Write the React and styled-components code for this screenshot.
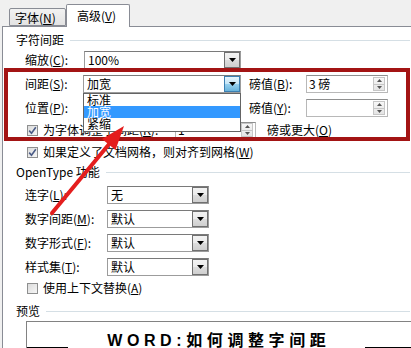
import React from 'react';
import styled, { createGlobalStyle } from 'styled-components';

const Global = createGlobalStyle`
  html, body { margin: 0; padding: 0; background: #f0f0f0; overflow: hidden; }
  body {
    font-family: "Noto Sans CJK SC", "Liberation Sans", sans-serif;
    font-size: 12px;
    color: #000;
  }
`;

const Window = styled.div`
  position: relative;
  width: 411px;
  height: 348px;
  overflow: hidden;
  background: #f0f0f0;
  display: flex;
  flex-direction: column;
  line-height: 14px;
`;

const TabStrip = styled.div`
  display: flex;
  align-items: flex-end;
  height: 26px;
  padding-left: 9px;
  flex: none;
`;

const Tab = styled.div`
  position: relative;
  z-index: ${p => (p.$active ? 2 : 1)};
  box-sizing: border-box;
  height: ${p => (p.$active ? 23 : 18)}px;
  width: ${p => p.$w}px;
  margin-bottom: ${p => (p.$active ? -1 : 0)}px;
  padding-left: ${p => p.$pl}px;
  padding-top: ${p => (p.$active ? 4 : 2)}px;
  border: 1px solid #898c95;
  border-bottom: ${p => (p.$active ? 'none' : '1px solid #898c95')};
  border-radius: 2px 2px 0 0;
  background: ${p => (p.$active ? '#fff' : 'linear-gradient(#f2f2f2, #e3e3e3)')};
  white-space: nowrap;
`;

const Key = styled.span`
  text-decoration: underline;
`;

const Panel = styled.div`
  flex: 1;
  margin-left: 2px;
  padding-right: 1px;
  border-top: 1px solid #898c95;
  border-left: 1px solid #898c95;
  background: #fff;
  display: flex;
  flex-direction: column;
  min-height: 0;
`;

const GroupTitle = styled.div`
  display: flex;
  align-items: center;
  height: 14px;
  margin-top: ${p => p.$mt}px;
  padding-left: 13px;
  white-space: nowrap;
  flex: none;
`;

const Rule = styled.div`
  flex: 1;
  height: 1px;
  margin-left: 6px;
  background: #d5dfe5;
`;

const Row = styled.div`
  display: flex;
  align-items: center;
  height: 18px;
  margin-top: ${p => p.$mt}px;
  padding-left: ${p => p.$pl ?? 22}px;
  flex: none;
`;

const Label = styled.span`
  flex: none;
  width: ${p => (p.$w ? `${p.$w}px` : 'auto')};
  margin-left: ${p => p.$ml ?? 0}px;
  white-space: nowrap;
`;

const ComboWrap = styled.div`
  position: relative;
  flex: none;
`;

const Combo = styled.div`
  box-sizing: border-box;
  width: ${p => p.$w}px;
  height: 18px;
  border: 1px solid #9c9c9c;
  border-top-color: #7a7a7a;
  background: #fff;
  display: flex;
  align-items: center;
`;

const ComboText = styled.span`
  flex: 1;
  padding-left: 3px;
  white-space: nowrap;
  overflow: hidden;
`;

const DropBtn = styled.div`
  box-sizing: border-box;
  width: 16px;
  height: 16px;
  flex: none;
  display: flex;
  align-items: center;
  justify-content: center;
  border: 1px solid ${p => (p.$open ? '#3c7fb1' : '#707070')};
  background: ${p =>
    p.$open
      ? 'linear-gradient(#e5f4fc, #c4e5f6 50%, #98d1ef 50%, #68b3db)'
      : 'linear-gradient(#f2f2f2, #ebebeb 50%, #dddddd 50%, #cfcfcf)'};
`;

const DropList = styled.div`
  position: absolute;
  z-index: 5;
  left: 0;
  top: 18px;
  width: 158px;
  box-sizing: border-box;
  border: 1px solid #646464;
  background: #fff;
  padding: 0 0 1px;
`;

const DropItem = styled.div`
  height: 12px;
  line-height: 12px;
  padding-left: 3px;
  background: ${p => (p.$sel ? '#3399ff' : 'transparent')};
  color: ${p => (p.$sel ? '#fff' : '#000')};
  overflow: hidden;
  white-space: nowrap;
`;

const SpinBox = styled.div`
  box-sizing: border-box;
  flex: none;
  width: ${p => p.$w}px;
  height: ${p => p.$h ?? 18}px;
  border: 1px solid #b8b8b8;
  border-top-color: #8e8f8f;
  background: #fff;
  display: flex;
  align-items: center;
  padding-right: 2px;
`;

const SpinText = styled.span`
  flex: 1;
  padding-left: 2px;
  white-space: nowrap;
`;

const SpinnerBox = styled.div`
  box-sizing: border-box;
  width: 12px;
  height: 14px;
  flex: none;
  display: flex;
  flex-direction: column;
  border: 1px solid #c6c6c6;
  background: linear-gradient(#f7f7f7, #e4e4e4);
`;

const SpinHalf = styled.div`
  flex: 1;
  display: flex;
  align-items: center;
  justify-content: center;
  border-top: ${p => (p.$bottom ? '1px solid #c6c6c6' : 'none')};
`;

const CheckRow = styled.div`
  display: flex;
  align-items: center;
  height: 16px;
  margin-top: ${p => p.$mt}px;
  padding-left: 24px;
  flex: none;
`;

const Box = styled.div`
  box-sizing: border-box;
  width: 11px;
  height: 11px;
  flex: none;
  border: 1px solid #8e8f8f;
  background: linear-gradient(135deg, #dcdcdc, #f6f6f6);
  display: flex;
  align-items: center;
  justify-content: center;
  margin-right: 5px;
`;

const Preview = styled.div`
  position: relative;
  flex: 1;
  margin: 3px -10px 0 23px;
  border: 1px solid #828282;
  background: #fff;
  display: flex;
  align-items: flex-start;
  padding-top: 11px;
`;

const BaseLine = styled.div`
  flex: none;
  width: ${p => p.$w}px;
  height: 1px;
  margin-top: 14px;
  background: #000;
`;

const Spacer = styled.div`
  flex: 1;
`;

const PreviewText = styled.div`
  flex: none;
  font-family: "Liberation Sans", "Noto Sans CJK SC", sans-serif;
  font-weight: bold;
  font-size: 16px;
  line-height: 16px;
  letter-spacing: 4.6px;
  white-space: nowrap;
  margin-right: -4.6px;
`;

const RedFrame = styled.div`
  position: absolute;
  z-index: 6;
  left: 4px;
  top: 68px;
  width: 406px;
  height: 73px;
  box-sizing: border-box;
  border: 4px solid #a31414;
  pointer-events: none;
`;

const ArrowLayer = styled.svg`
  position: absolute;
  z-index: 7;
  left: 0;
  top: 0;
  pointer-events: none;
`;

const Tri = ({ up }) => (
  <svg width="7" height="4" viewBox="0 0 7 4">
    <path d={up ? 'M0 4 L3.5 0 L7 4 Z' : 'M0 0 L7 0 L3.5 4 Z'} fill="#000" />
  </svg>
);

const SmallTri = ({ up }) => (
  <svg width="5" height="3" viewBox="0 0 5 3">
    <path d={up ? 'M0 3 L2.5 0 L5 3 Z' : 'M0 0 L5 0 L2.5 3 Z'} fill="#555" />
  </svg>
);

const Spinner = () => (
  <SpinnerBox>
    <SpinHalf><SmallTri up /></SpinHalf>
    <SpinHalf $bottom><SmallTri /></SpinHalf>
  </SpinnerBox>
);

const CheckBox = ({ checked }) => (
  <Box>
    {checked && (
      <svg width="9" height="9" viewBox="0 0 9 9">
        <path d="M1.2 4.6 L3.5 7.2 L7.8 1.2" fill="none" stroke="#4a5b86" strokeWidth="1.6" />
      </svg>
    )}
  </Box>
);

const OTRow = ({ label, k, value, mt }) => (
  <Row $mt={mt}>
    <Label $w={82}>{label}(<Key>{k}</Key>):</Label>
    <Combo $w={102}>
      <ComboText>{value}</ComboText>
      <DropBtn><Tri /></DropBtn>
    </Combo>
  </Row>
);

export default function App() {
  return (
    <>
      <Global />
      <Window>
        <TabStrip>
          <Tab $w={57} $pl={5}>字体(<Key>N</Key>)</Tab>
          <Tab $active $w={64} $pl={10}>高级(<Key>V</Key>)</Tab>
        </TabStrip>
        <Panel>
          <GroupTitle $mt={6}><span>字符间距</span><Rule /></GroupTitle>
          <Row $mt={4}>
            <Label $w={59}>缩放(<Key>C</Key>):</Label>
            <Combo $w={157}>
              <ComboText>100%</ComboText>
              <DropBtn><Tri /></DropBtn>
            </Combo>
          </Row>
          <Row $mt={6}>
            <Label $w={58}>间距(<Key>S</Key>):</Label>
            <ComboWrap>
              <Combo $w={158}>
                <ComboText>加宽</ComboText>
                <DropBtn $open><Tri /></DropBtn>
              </Combo>
              <DropList>
                <DropItem>标准</DropItem>
                <DropItem $sel>加宽</DropItem>
                <DropItem>紧缩</DropItem>
              </DropList>
            </ComboWrap>
            <Label $w={57} $ml={8}>磅值(<Key>B</Key>):</Label>
            <SpinBox $w={82}>
              <SpinText>3 磅</SpinText>
              <Spinner />
            </SpinBox>
          </Row>
          <Row $mt={6}>
            <Label $w={58}>位置(<Key>P</Key>):</Label>
            <Combo $w={158}>
              <ComboText>标准</ComboText>
              <DropBtn><Tri /></DropBtn>
            </Combo>
            <Label $w={57} $ml={8}>磅值(<Key>Y</Key>):</Label>
            <SpinBox $w={82}>
              <SpinText></SpinText>
              <Spinner />
            </SpinBox>
          </Row>
          <CheckRow $mt={5}>
            <CheckBox checked />
            <Label $w={132}>为字体调整字间距(<Key>K</Key>):</Label>
            <SpinBox $w={81} $h={17}>
              <SpinText>1</SpinText>
              <Spinner />
            </SpinBox>
            <Label $ml={11}>磅或更大(<Key>O</Key>)</Label>
          </CheckRow>
          <CheckRow $mt={6}>
            <CheckBox checked />
            <Label>如果定义了文档网格，则对齐到网格(<Key>W</Key>)</Label>
          </CheckRow>
          <GroupTitle $mt={5}><span>OpenType 功能</span><Rule /></GroupTitle>
          <OTRow mt={7} label="连字" k="L" value="无" />
          <OTRow mt={6} label="数字间距" k="M" value="默认" />
          <OTRow mt={6} label="数字形式" k="F" value="默认" />
          <OTRow mt={6} label="样式集" k="T" value="默认" />
          <CheckRow $mt={4}>
            <CheckBox />
            <Label>使用上下文替换(<Key>A</Key>)</Label>
          </CheckRow>
          <GroupTitle $mt={8}><span>预览</span><Rule /></GroupTitle>
          <Preview>
            <BaseLine $w={41} />
            <Spacer />
            <PreviewText>WORD:如何调整字间距</PreviewText>
            <Spacer />
            <BaseLine $w={54} />
          </Preview>
        </Panel>
        <RedFrame />
        <ArrowLayer width="411" height="348" viewBox="0 0 411 348">
          <line x1="52" y1="213" x2="110" y2="143" stroke="#e41e1e" strokeWidth="4" strokeLinecap="round" />
          <polygon points="124,126 115.5,150 102,139" fill="#e41e1e" />
        </ArrowLayer>
      </Window>
    </>
  );
}
